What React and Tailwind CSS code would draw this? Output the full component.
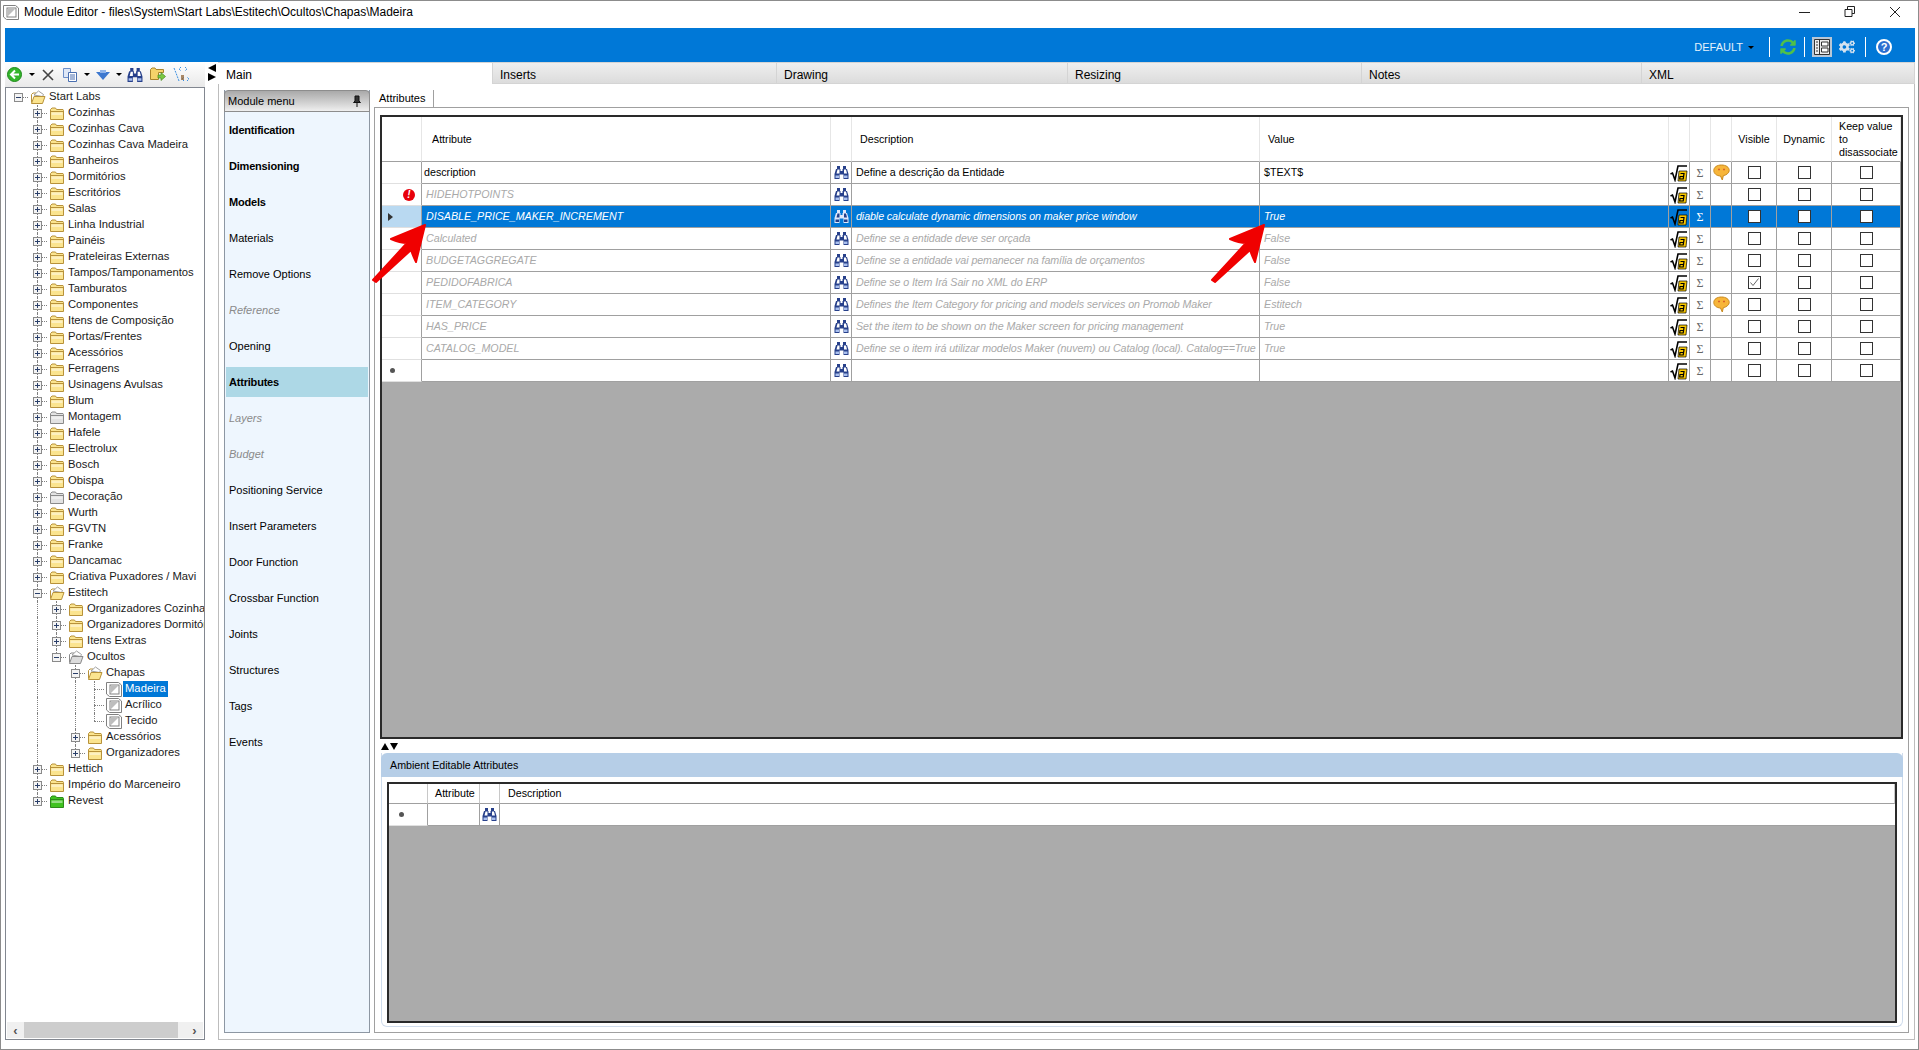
import React from 'react';
import { FaCogs, FaSyncAlt } from 'react-icons/fa';

const FONT = "font-['Liberation_Sans',Arial,sans-serif]";

const tree = [
  ['Start Labs', 0, 'open'],
  ['Cozinhas', 1], ['Cozinhas Cava', 1], ['Cozinhas Cava Madeira', 1], ['Banheiros', 1], ['Dormitórios', 1],
  ['Escritórios', 1], ['Salas', 1], ['Linha Industrial', 1], ['Painéis', 1], ['Prateleiras Externas', 1],
  ['Tampos/Tamponamentos', 1], ['Tamburatos', 1], ['Componentes', 1], ['Itens de Composição', 1], ['Portas/Frentes', 1],
  ['Acessórios', 1], ['Ferragens', 1], ['Usinagens Avulsas', 1], ['Blum', 1], ['Montagem', 1, 'gray'],
  ['Hafele', 1], ['Electrolux', 1], ['Bosch', 1], ['Obispa', 1], ['Decoração', 1, 'gray'], ['Wurth', 1],
  ['FGVTN', 1], ['Franke', 1], ['Dancamac', 1], ['Criativa Puxadores / Mavi', 1],
  ['Estitech', 1, 'open'],
  ['Organizadores Cozinha', 2], ['Organizadores Dormitório', 2], ['Itens Extras', 2],
  ['Ocultos', 2, 'opengray', true],
  ['Chapas', 3, 'open'],
  ['Madeira', 4, 'leaf', false, true], ['Acrílico', 4, 'leaf'], ['Tecido', 4, 'leaf', true],
  ['Acessórios', 3], ['Organizadores', 3, 'folder', true],
  ['Hettich', 1], ['Império do Marceneiro', 1], ['Revest', 1, 'green', true],
];

const menu = [
  ['Identification', 'b'], ['Dimensioning', 'b'], ['Models', 'b'], ['Materials'], ['Remove Options'], ['Reference', 'd'],
  ['Opening'], ['Attributes', 's'], ['Layers', 'd'], ['Budget', 'd'], ['Positioning Service'], ['Insert Parameters'],
  ['Door Function'], ['Crossbar Function'], ['Joints'], ['Structures'], ['Tags'], ['Events'],
];

const rows = [
  { name: 'description', desc: 'Define a descrição da Entidade', value: '$TEXT$', bubble: true },
  { name: 'HIDEHOTPOINTS', desc: '', value: '', off: true, error: true },
  { name: 'DISABLE_PRICE_MAKER_INCREMENT', desc: 'diable calculate dynamic dimensions on maker price window', value: 'True', selected: true },
  { name: 'Calculated', desc: 'Define se a entidade deve ser orçada', value: 'False', off: true },
  { name: 'BUDGETAGGREGATE', desc: 'Define se a entidade vai pemanecer na família de orçamentos', value: 'False', off: true },
  { name: 'PEDIDOFABRICA', desc: 'Define se o Item Irá Sair no XML do ERP', value: 'False', off: true, visible: true },
  { name: 'ITEM_CATEGORY', desc: 'Defines the Item Category for pricing and models services on Promob Maker', value: 'Estitech', off: true, bubble: true },
  { name: 'HAS_PRICE', desc: 'Set the item to be shown on the Maker screen for pricing management', value: 'True', off: true },
  { name: 'CATALOG_MODEL', desc: 'Define se o item irá utilizar modelos Maker (nuvem) ou Catalog (local). Catalog==True', value: 'True', off: true },
  { name: '', desc: '', value: '', isNew: true },
];

const tabs = [['Main', 'w-[275px] pl-[8px]'], ['Inserts', 'w-[284px] pl-[7px]'], ['Drawing', 'w-[291px] pl-[7px]'], ['Resizing', 'w-[294px] pl-[7px]'], ['Notes', 'w-[280px] pl-[7px]'], ['XML', 'flex-1 pl-[7px]']];

const GRID_COLS = 'grid grid-cols-[40px_409px_21px_408px_409px_21px_21px_21px_45px_55px_69px]';

const FOLDERS = {
  folder: ['#fbe48f', '#b8923a'],
  open: ['#fbe48f', '#b8923a'],
  gray: ['#e2e2e2', '#8a8a8a'],
  opengray: ['#dcdcdc', '#8a8a8a'],
  green: ['#3fc21f', '#2d8a1a'],
};

const Folder = ({ kind = 'folder' }) => {
  const [fill, line] = FOLDERS[kind];
  if (kind === 'open' || kind === 'opengray') {
    return (
      <svg width="16" height="16" viewBox="0 0 16 16" className="shrink-0">
        <path d="M1.5 13.5V5.5L3 4h3l1 1" fill="none" stroke={line} />
        <path d="M4 6L8.5 2l5 3.5-1 2z" fill="#fff" stroke="#a0a0a0" />
        <path d="M1.5 14.5L4 7.5h11l-2.5 7z" fill={fill} stroke={line} />
      </svg>
    );
  }
  return (
    <svg width="16" height="16" viewBox="0 0 16 16" className="shrink-0">
      <path d="M1.5 14.5V4.5L3 3h3.5l1 1.5H14l.5 1v9z" fill={fill} stroke={line} />
      <path d="M2 6.5h12" stroke={line} />
      <path d="M2.5 7.5h11V10h-11z" fill="#fff" opacity=".45" />
    </svg>
  );
};

const Leaf = () => (
  <svg width="16" height="16" viewBox="0 0 16 16" className="shrink-0">
    <path d="M.5 1.5h12l3 2.5v11.5h-12l-3-2.5z" fill="#fff" stroke="#808080" />
    <rect x="4" y="4" width="9" height="9" fill="#fff" stroke="#808080" />
    <path d="M5 12V5h7z" fill="#bdbdbd" />
  </svg>
);

const Binoculars = ({ selected, size = 15 }) => (
  <svg width={size} height={size} viewBox="0 0 15 15">
    <path d="M3 1h3v3h.500v2h2V4H9V1h3v3h1l1.500 5v5h-5V9.500h-4V14h-5V9L2 4h1z" fill={selected ? '#dfe7fb' : '#27408b'} />
    <path d="M3.500 4.500H5.500v4H2.500zM10 4.500h2l1 4h-3z" fill={selected ? '#24408a' : '#ffffff'} />
    <path d="M1.500 10.500h3.500v2.500H1.500zM10 10.500h3.500v2.500H10z" fill={selected ? '#24408a' : '#a9bfee'} />
  </svg>
);

const Sqrt = () => (
  <svg width="18" height="18" viewBox="0 0 18 18">
    <path d="M.5 10l2-1 2.500 7L8 2h9" fill="none" stroke="#000" strokeWidth="1.600" />
    <path d="M9 7h8l-1 10H8z" fill="#f7c600" stroke="#000" strokeWidth=".7" />
    <path d="M10.500 9.500h3.500l-.8 5.500h-3.500l.3-2.500h3" fill="none" stroke="#000" strokeWidth="1.200" />
  </svg>
);

const Bubble = () => (
  <svg width="17" height="18" viewBox="0 0 17 18">
    <path d="M8.500 1C4 1 .8 3.200.8 6.500c0 3 2.700 5.300 6.700 5.500l1.800 4 1-4.300c3.200-.7 5.900-2.800 5.900-5.200C16.200 3.200 13 1 8.500 1z" fill="#f7b53a" stroke="#c98a1e" />
    <path d="M5 5.500h2M10 5.500h2" stroke="#d9622a" strokeWidth="1.500" />
  </svg>
);

const Check = ({ checked }) => (
  <div className="w-[13px] h-[13px] border border-[#333] bg-white flex items-center justify-center">
    {checked && (
      <svg width="11" height="11" viewBox="0 0 11 11">
        <path d="M1.500 5.500l2.500 3 5.500-7" fill="none" stroke="#666" />
      </svg>
    )}
  </div>
);

const Caret = () => <span className="block w-0 h-0 border-x-[3px] border-x-transparent border-t-[3px] border-t-black" />;

const TreeRow = ({ name, level, kind = 'folder', last, selected }) => {
  const leaf = kind === 'leaf';
  return (
    <div className="flex items-center h-4 whitespace-nowrap">
      {[0, 1, 2, 3].slice(0, level).map((col) => (
        <div key={col} className="relative w-[19px] h-4 shrink-0">
          {((col === 1 && level > 1) || (col === 3 && level === 4)) && (
            <span className="absolute left-[9px] top-0 bottom-0 border-l border-dotted border-[#808080]" />
          )}
        </div>
      ))}
      <div className="relative w-[19px] h-4 shrink-0">
        {level > 0 && (
          <span className={`absolute left-[9px] top-0 border-l border-dotted border-[#808080] ${last ? 'h-2' : 'h-4'}`} />
        )}
        <span className="absolute left-[9px] w-[10px] top-[8px] border-t border-dotted border-[#808080]" />
        {!leaf && (
          <span className="absolute left-[5px] top-[4px] w-[9px] h-[9px] border border-[#8a8a8a] bg-[#f4f4f4] flex items-center justify-center">
            <span className="relative w-[5px] h-px bg-[#2a3f6a]">
              {kind !== 'open' && kind !== 'opengray' && <span className="absolute left-[2px] top-[-2px] w-px h-[5px] bg-[#2a3f6a]" />}
            </span>
          </span>
        )}
      </div>
      <div className="ml-[2px] mr-[1px] shrink-0">{leaf ? <Leaf /> : <Folder kind={kind} />}</div>
      <span className={`px-[2px] h-4 leading-[15px] ${selected ? 'bg-[#0078d7] text-white' : 'text-[#1a1a1a]'}`}>{name}</span>
    </div>
  );
};

const GridRow = ({ row }) => {
  const tone = row.selected ? 'bg-[#0078d7] text-white italic' : row.off ? 'bg-white text-[#a9a9a9] italic' : 'bg-white text-black';
  const cell = `border-r border-b border-[#a0a0a0] h-[22px] flex items-center overflow-hidden whitespace-nowrap ${row.selected ? 'bg-[#0078d7]' : 'bg-white'}`;
  const center = `${cell} justify-center`;
  return (
    <div className={`${GRID_COLS} ${tone} text-[10.7px]`}>
      <div className={`h-[22px] border-b border-r border-b-[#e0e0e0] border-r-[#a0a0a0] flex items-center relative ${row.selected ? 'bg-[#b9d9f1]' : 'bg-white'}`}>
        {row.selected && <span className="ml-[6px] w-0 h-0 border-y-[4px] border-y-transparent border-l-[5px] border-l-[#333]" />}
        {row.isNew && <span className="ml-[8px] w-[5px] h-[5px] rounded-full bg-[#555]" />}
        {row.error && (
          <span className="ml-auto mr-[6px] w-[12px] h-[12px] rounded-full bg-[#e8000b] text-white text-[10px] font-bold leading-[12px] text-center">!</span>
        )}
      </div>
      <div className={`${cell} ${row.off || row.selected ? 'pl-[4px]' : 'pl-[2px]'}`}>{row.name}</div>
      <div className={center}><Binoculars selected={row.selected} /></div>
      <div className={`${cell} pl-[4px] ${row.off || row.selected ? 'tracking-[-0.09px]' : ''}`}>{row.desc}</div>
      <div className={`${cell} pl-[4px]`}>{row.value}</div>
      <div className={center}><Sqrt /></div>
      <div className={`${center} not-italic font-['Liberation_Serif',serif] text-[12px] ${row.selected ? 'text-white' : 'text-[#666]'}`}>Σ</div>
      <div className={center}>{row.bubble && <Bubble />}</div>
      <div className={center}><Check checked={row.visible} /></div>
      <div className={center}><Check /></div>
      <div className={center}><Check /></div>
    </div>
  );
};

const RedArrow = ({ className }) => (
  <svg width="60" height="64" viewBox="0 0 60 64" className={`absolute ${className}`}>
    <path d="M55 3L21 17Q30 21 37 21L3 58L6 60L41 28Q43 34 46 40Z" fill="#f00000" stroke="#f00000" strokeWidth="2" strokeLinejoin="round" />
  </svg>
);

export default function App() {
  return (
    <div className={`relative w-[1919px] h-[1050px] bg-white border border-[#8c8c8c] overflow-hidden flex flex-col text-[11px] text-black ${FONT}`}>
      {/* Title bar */}
      <div className="h-[27px] flex items-center shrink-0 pb-[6px]">
        <div className="ml-[2px] mr-[5px]"><Leaf /></div>
        <span className="text-[12px]">Module Editor - files\System\Start Labs\Estitech\Ocultos\Chapas\Madeira</span>
        <svg width="112" height="14" viewBox="0 0 112 14" className="ml-auto mr-[7px]">
          <path d="M0 7.500h11" stroke="#222" />
          <path d="M46 4.500h7v7h-7zM48.500 4V1.500h7v7H53" fill="none" stroke="#222" />
          <path d="M91 2l10 10M101 2L91 12" stroke="#222" />
        </svg>
      </div>

      <div className="flex-1 flex flex-col pl-[4px] pr-[3px] pb-[9px] min-h-0">
        {/* Blue bar */}
        <div className="h-[34px] shrink-0 bg-[#0078d7] flex items-center justify-end text-white pr-[23px] pt-[4px]">
          <span className="text-[11px] text-[#e6f2fc]">DEFAULT</span>
          <span className="ml-[5px] mr-[15px]"><Caret /></span>
          <span className="w-px h-[20px] bg-white" />
          <FaSyncAlt className="ml-[10px] mr-[8px] text-[#4fc04a]" size="16" />
          <span className="w-px h-[20px] bg-white" />
          <span className="ml-[7px] w-[20px] h-[20px] bg-[#b9c7d6] flex items-center justify-center">
            <svg width="16" height="16" viewBox="0 0 16 16">
              <path d="M.5.500h15v15H.5zM5.500.500v15" fill="#eee" stroke="#333" />
              <path d="M7.500 3h6.500v4H7.500zM7.500 9h6.500v4H7.500z" fill="#fff" stroke="#333" />
              <path d="M2 3h2M2 6h2M2 9h2M2 12h2" stroke="#333" />
            </svg>
          </span>
          <FaCogs className="ml-[7px] mr-[10px] text-[#d5e2ef]" size="16" />
          <span className="w-px h-[20px] bg-white" />
          <span className="ml-[10px] w-[16px] h-[16px] rounded-full bg-[#2b6fd1] border-2 border-white text-white text-[11px] font-bold leading-[12px] text-center">?</span>
        </div>

        <div className="flex-1 flex min-h-0">
          {/* Left: toolbar + tree */}
          <div className="w-[200px] shrink-0 flex flex-col">
            <div className="h-[25px] shrink-0 bg-gradient-to-b from-white to-[#e9e9e9] flex items-center pl-[2px]">
              <span className="w-[15px] h-[15px] rounded-full bg-[#35b52b] border border-[#1e8a1a] flex items-center justify-center">
                <svg width="11" height="11" viewBox="0 0 11 11"><path d="M6 1.500L2 5.500l4 4M2 5.500h8" fill="none" stroke="#fff" strokeWidth="2" /></svg>
              </span>
              <span className="ml-[7px]"><Caret /></span>
              <svg width="14" height="14" viewBox="0 0 14 14" className="ml-[6px]"><path d="M2 2l10 10M12 2L2 12" stroke="#444" strokeWidth="1.600" /></svg>
              <svg width="16" height="16" viewBox="0 0 16 16" className="ml-[7px]">
                <path d="M1.500 1.500h7v9h-7z" fill="#dfe8f7" stroke="#6d8fc9" />
                <path d="M6.500 5.500h8v9h-8z" fill="#fff" stroke="#4a6fb0" />
                <path d="M8 8h5M8 10h5M8 12h5" stroke="#4a6fb0" />
              </svg>
              <span className="ml-[6px]"><Caret /></span>
              <svg width="14" height="12" viewBox="0 0 14 12" className="ml-[6px]"><path d="M0 3h14L7 11z" fill="#3d78cf" /><path d="M4 1h6v3H4z" fill="#8fb4ea" /></svg>
              <span className="ml-[6px]"><Caret /></span>
              <span className="ml-[5px]"><Binoculars size={16} /></span>
              <svg width="16" height="15" viewBox="0 0 16 15" className="ml-[7px]">
                <path d="M.5 12.500v-10L2 1h3l1 1.500h7.500v3h-5v7z" fill="#f5d36a" stroke="#a8842c" />
                <path d="M8 8h3V5.500l4.500 4-4.500 4V11H8z" fill="#7ac943" stroke="#4a8a22" strokeWidth=".7" />
              </svg>
              <svg width="17" height="17" viewBox="0 0 17 17" className="ml-[7px]">
                <path d="M8 1L6 3l2 2M12 1l2 2-2 2M1 2l2 5 3 8M11 15l-2-2 2-2M14 15l2-2-2-2" fill="none" stroke="#3b8fe0" strokeDasharray="2 1" />
                <path d="M8 9h3v5H8z" fill="#8a5a2a" opacity=".7" />
              </svg>
            </div>
            <div className="flex-1 border border-[#828790] bg-white flex flex-col min-h-0 text-[11.25px]">
              <div className="flex-1 overflow-hidden pl-[3px] pt-px">
                {tree.map(([name, level, kind, last, selected]) => (
                  <TreeRow key={name + level} name={name} level={level} kind={kind} last={last} selected={selected} />
                ))}
              </div>
              <div className="h-[16px] shrink-0 mx-[1px] mb-[1px] bg-[#f0f0f0] flex items-center">
                <span className="w-[17px] text-center text-[#555] text-[13px] font-bold leading-none">‹</span>
                <span className="w-[154px] h-full bg-[#cdcdcd]" />
                <span className="flex-1 pl-[8px] text-center text-[#555] text-[13px] font-bold leading-none">›</span>
              </div>
            </div>
          </div>

          {/* Splitter */}
          <div className="w-[13px] shrink-0 flex flex-col items-center pt-[2px] gap-px">
            <span className="w-0 h-0 border-y-[4px] border-y-transparent border-r-[8px] border-r-black" />
            <span className="w-0 h-0 border-y-[4px] border-y-transparent border-l-[8px] border-l-black" />
          </div>

          {/* Main */}
          <div className="flex-1 flex flex-col min-w-0">
            <div className="h-[22px] shrink-0 flex text-[12px]">
              {tabs.map(([label, width], i) => (
                <div key={label} className={`${width} pt-[3px] flex items-center border-r border-t border-[#d4d4d4] ${i === 0 ? 'bg-white' : 'bg-gradient-to-b from-[#efefef] to-[#dcdcdc] border-b'}`}>
                  {label}
                </div>
              ))}
            </div>
            <div className="flex-1 flex border-x border-b border-[#bdbdbd] px-[5px] pt-[6px] pb-[6px] min-h-0">
              {/* Module menu */}
              <div className="w-[146px] shrink-0 flex flex-col border-x border-b border-[#8d97a3] bg-[#eef6fe]">
                <div className="h-[22px] shrink-0 -mx-px border border-[#8d8d8d] rounded-t-sm bg-gradient-to-b from-[#a9a9a9] to-[#efefef] flex items-center pl-[3px] pr-[8px]">
                  <span>Module menu</span>
                  <svg width="8" height="12" viewBox="0 0 8 12" className="ml-auto"><path d="M2 1h4v5l1.500 1.500h-7L2 6zM4 7.500V12" fill="#333" stroke="#111" /></svg>
                </div>
                {menu.map(([label, style]) => (
                  <div key={label} className="h-9 shrink-0 px-px py-[3px] flex">
                    <span className={`flex-1 pl-[3px] flex items-center ${style === 'b' ? 'font-bold tracking-[-0.2px]' : ''} ${style === 's' ? 'font-bold tracking-[-0.2px] bg-[#add8e6]' : ''} ${style === 'd' ? 'italic text-[#8a8a8a]' : ''}`}>
                      {label}
                    </span>
                  </div>
                ))}
              </div>

              {/* Attributes panel */}
              <div className="flex-1 ml-[4px] flex flex-col min-w-0">
                <div className="h-[18px] shrink-0 flex border-b border-[#a0a0a0]">
                  <div className="w-[59px] ml-px pl-[4px] border-r border-[#a0a0a0] bg-white flex items-center">Attributes</div>
                </div>
                <div className="flex-1 flex flex-col border-x border-b border-[#a0a0a0] pl-[5px] pr-[5px] pt-[7px] pb-[5px] min-h-0">
                  <div className="h-[624px] shrink-0 border-2 border-[#2a2a2a] bg-[#ababab]">
                    <div className={`${GRID_COLS} bg-white h-[45px] text-[10.7px]`}>
                      {[
                        ['', ''],
                        ['Attribute', 'pl-[10px]'],
                        ['', ''],
                        ['Description', 'pl-[8px]'],
                        ['Value', 'pl-[8px]'],
                        ['', ''],
                        ['', ''],
                        ['', ''],
                        ['Visible', 'justify-center'],
                        ['Dynamic', 'justify-center'],
                        ['Keep value to disassociate', 'pl-[7px] leading-[13px]'],
                      ].map(([label, cls], i) => (
                        <div key={i} className={`flex items-center border-b border-r border-b-[#a0a0a0] border-r-[#e6e6e6] ${cls}`}>{label}</div>
                      ))}
                    </div>
                    {rows.map((row, i) => <GridRow key={i} row={row} />)}
                  </div>
                  <div className="h-[14px] shrink-0 flex items-center pl-px gap-[1px]">
                    <span className="w-0 h-0 border-x-[4px] border-x-transparent border-b-[7px] border-b-black" />
                    <span className="w-0 h-0 border-x-[4px] border-x-transparent border-t-[7px] border-t-black" />
                  </div>
                  <div className="flex-1 ml-px flex flex-col min-h-0 border-x border-b border-[#cfdcec] rounded-b-md">
                    <div className="h-[24px] shrink-0 -mx-px rounded-t-md bg-[#b6cee7] flex items-center pl-[9px] text-[10.7px]">Ambient Editable Attributes</div>
                    <div className="flex-1 p-[5px] pb-[3px] min-h-0 flex text-[10.7px]">
                      <div className="flex-1 border-2 border-[#2a2a2a] bg-[#ababab]">
                        <div className="grid grid-cols-[39px_52px_20px_1fr] bg-white h-[20px]">
                          {['', 'Attribute', '', 'Description'].map((label, i) => (
                            <div key={i} className={`flex items-center border-b border-r border-b-[#a0a0a0] border-r-[#c8c8c8] ${i === 1 ? 'pl-[7px]' : 'pl-[8px]'}`}>{label}</div>
                          ))}
                        </div>
                        <div className="grid grid-cols-[39px_52px_20px_1fr] bg-white h-[22px]">
                          <div className="border-b border-r border-b-[#e0e0e0] border-r-[#a0a0a0] flex items-center pl-[10px]"><span className="w-[5px] h-[5px] rounded-full bg-[#555]" /></div>
                          <div className="border-b border-r border-[#a0a0a0]" />
                          <div className="border-b border-r border-[#a0a0a0] flex items-center justify-center"><Binoculars /></div>
                          <div className="border-b border-[#a0a0a0]" />
                        </div>
                      </div>
                    </div>
                  </div>
                </div>
              </div>
            </div>
          </div>
        </div>
      </div>

      {/* Annotation arrows */}
      <RedArrow className="left-[369px] top-[221px]" />
      <RedArrow className="left-[1208px] top-[221px]" />
    </div>
  );
}
